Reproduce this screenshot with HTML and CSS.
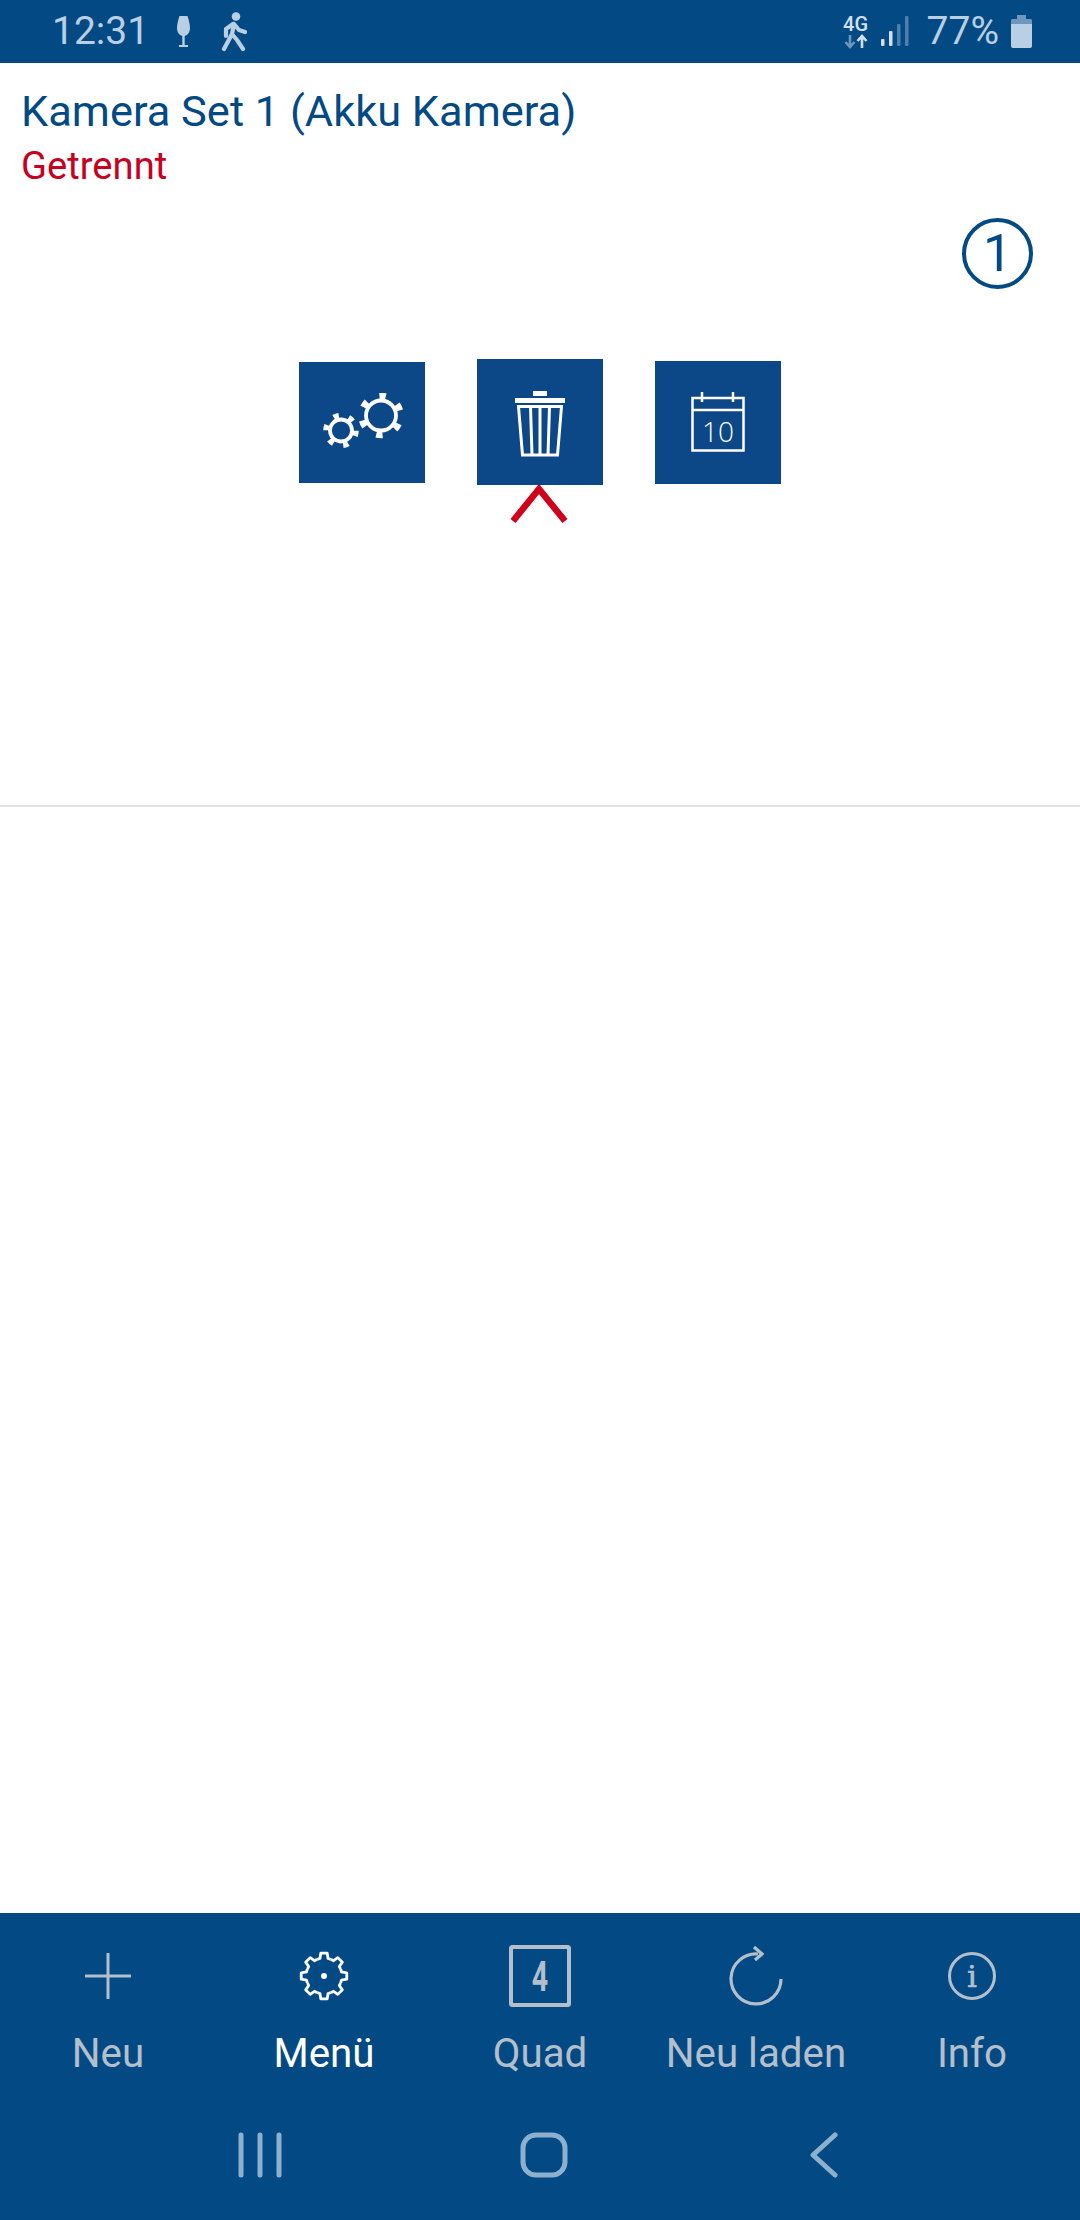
FILE: index.html
```html
<!DOCTYPE html>
<html lang="de">
<head>
    <meta charset="UTF-8">
    <meta name="viewport" content="width=device-width,initial-scale=1">
    <title>Kamera Set 1</title>
    <link rel="stylesheet" href="styles.css">
</head>
<body>

    <div class="statusBar">
        <div class="statusLeft">
            <span class="statusText">12:31</span>
            <svg class="icoGlass" width="13" height="32" viewBox="0 0 13 32">
                <path d="M2.500 0h8c1.500 4 2.500 9 2.500 12 0 4-2 7-5.300 8v9H11v2H2v-2h3.300v-9C2 19 0 16 0 12 0 9 1 4 2.500 0z" fill="#b9cfe3"/>
            </svg>
            <svg class="icoWalk" width="26" height="40" viewBox="0 0 26 40">
                <circle cx="15" cy="4.500" r="4.300" fill="#b9cfe3"/>
                <path d="M13 12l-2 10M13 12l5 6 6 2M12 12l-7 5v7M11 22L3 37M11 22l5 6 6 9" fill="none" stroke="#b9cfe3" stroke-width="4.200" stroke-linecap="round" stroke-linejoin="round"/>
            </svg>
        </div>
        <div class="statusRight">
            <div class="netType">
                <span class="netLabel">4G</span>
                <svg width="24" height="15" viewBox="0 0 24 15">
                    <path d="M6 1v11M1.500 8L6 13l4.500-5" fill="none" stroke="#6f97bd" stroke-width="2.600"/>
                    <path d="M18 14V3M13.500 7L18 2l4.500 5" fill="none" stroke="#d3e0ec" stroke-width="2.600"/>
                </svg>
            </div>
            <svg class="icoSignal" width="28" height="30" viewBox="0 0 28 30">
                <rect x="0" y="23" width="3.500" height="7" rx="1" fill="#d3e0ec"/>
                <rect x="8" y="15" width="3.500" height="15" rx="1" fill="#d3e0ec"/>
                <rect x="16" y="8" width="3.500" height="22" rx="1" fill="#4f7fac"/>
                <rect x="24" y="0" width="3.500" height="30" rx="1" fill="#4f7fac"/>
            </svg>
            <span class="statusText">77%</span>
            <svg class="icoBattery" width="21" height="33" viewBox="0 0 21 33">
                <path d="M6 0h9v4h4.500c.8 0 1.500.7 1.500 1.500V9H0V5.500C0 4.700.7 4 1.500 4H6z" fill="#6f97bd"/>
                <path d="M0 9h21v22c0 1.100-.9 2-2 2H2c-1.100 0-2-.9-2-2z" fill="#b9cfe3"/>
            </svg>
        </div>
    </div>

    <div class="panel">
        <div class="camTitle">Kamera Set 1 (Akku Kamera)</div>
        <div class="camState">Getrennt</div>

        <div class="numRow">
            <span class="numBadge">1</span>
        </div>

        <div class="actions">
            <div class="btnA btnGear">
                <svg class="gearPair" width="81" height="55" viewBox="0 0 81 55">
                    <circle cx="58" cy="22.500" r="15" fill="none" stroke="#fff" stroke-width="3.800"/>
                    <circle cx="58" cy="22.500" r="19.500" fill="none" stroke="#fff" stroke-width="6.500" pathLength="60" stroke-dasharray="3.200 6.800" stroke-dashoffset="-4.200"/>
                    <circle cx="18" cy="37.500" r="11" fill="none" stroke="#fff" stroke-width="3.800"/>
                    <circle cx="18" cy="37.500" r="15" fill="none" stroke="#fff" stroke-width="5.500" pathLength="60" stroke-dasharray="3.400 6.600" stroke-dashoffset="-.13"/>
                </svg>
            </div>
            <div class="btnA btnTrash">
                <svg class="trashIco" width="52" height="66" viewBox="0 0 52 66">
                    <rect x="19" y="0" width="14" height="5" fill="#fff"/>
                    <rect x="1" y="7" width="50" height="5" fill="#fff"/>
                    <path d="M4.500 15.500h43l-4 48.500h-35zM16.500 15.500l1.500 48.500M26 15.500v48.500M35.500 15.500l-1.500 48.500" fill="none" stroke="#fff" stroke-width="3"/>
                </svg>
                <svg class="pointer" width="58" height="38" viewBox="0 0 58 38">
                    <path d="M3 36L29 4l26 32" fill="none" stroke="#d0021b" stroke-width="6.500"/>
                </svg>
            </div>
            <div class="btnA btnCal">
                <svg width="54" height="60" viewBox="0 0 54 60">
                    <path d="M1.500 6h51v52.500h-51zM1.500 18h51M11 0v10M42 0v10" fill="none" stroke="#fff" stroke-width="2.500"/>
                    <text x="27" y="50" class="calDay" text-anchor="middle">10</text>
                </svg>
            </div>
        </div>
    </div>

    <div class="spacer"></div>

    <div class="tabBar">
        <div class="tab">
            <svg class="tabIco" width="64" height="64" viewBox="0 0 64 64">
                <path d="M32 9v46M9 32h46" fill="none" stroke="#b4bfcc" stroke-width="3"/>
            </svg>
            <span class="tabLabel">Neu</span>
        </div>
        <div class="tab on">
            <svg class="tabIco" width="64" height="64" viewBox="-32 -32 64 64">
                <defs>
                    <path id="cogTooth" d="M-6.890-16.630L-4.050-17.540-3.200-22.780H3.200L4.050-17.540 6.890-16.630" fill="none" stroke="#fff" stroke-width="2.800" stroke-linejoin="round"/>
                </defs>
                <use href="#cogTooth"/>
                <use href="#cogTooth" transform="rotate(45)"/>
                <use href="#cogTooth" transform="rotate(90)"/>
                <use href="#cogTooth" transform="rotate(135)"/>
                <use href="#cogTooth" transform="rotate(180)"/>
                <use href="#cogTooth" transform="rotate(225)"/>
                <use href="#cogTooth" transform="rotate(270)"/>
                <use href="#cogTooth" transform="rotate(315)"/>
                <circle r="3" fill="#fff"/>
            </svg>
            <span class="tabLabel">Menü</span>
        </div>
        <div class="tab">
            <svg class="tabIco" width="64" height="64" viewBox="0 0 64 64">
                <rect x="3" y="3" width="58" height="58" rx="1.500" fill="none" stroke="#b4bfcc" stroke-width="4"/>
                <text class="quadNum" transform="translate(32 47) scale(.68 1)" text-anchor="middle">4</text>
            </svg>
            <span class="tabLabel">Quad</span>
        </div>
        <div class="tab">
            <svg class="tabIco" width="64" height="64" viewBox="0 0 64 64">
                <path d="M57 35A25 25 0 1 1 34 10" fill="none" stroke="#b4bfcc" stroke-width="3.200"/>
                <path d="M30 3l8 7-7 6" fill="none" stroke="#b4bfcc" stroke-width="3.200"/>
            </svg>
            <span class="tabLabel">Neu laden</span>
        </div>
        <div class="tab">
            <svg class="tabIco" width="64" height="64" viewBox="0 0 64 64">
                <circle cx="32" cy="32" r="22.500" fill="none" stroke="#b4bfcc" stroke-width="3"/>
                <text class="infoDot" x="32" y="43" text-anchor="middle">i</text>
            </svg>
            <span class="tabLabel">Info</span>
        </div>
    </div>

    <div class="navBar">
        <svg width="60" height="46" viewBox="0 0 60 46">
            <path d="M11 3v40M30 3v40M49 3v40" fill="none" stroke="#8eb0cf" stroke-width="5" stroke-linecap="round"/>
        </svg>
        <svg width="60" height="46" viewBox="0 0 60 46">
            <rect x="9" y="3" width="42" height="40" rx="13" fill="none" stroke="#8eb0cf" stroke-width="5"/>
        </svg>
        <svg width="60" height="46" viewBox="0 0 60 46">
            <path d="M37 3L15 23l22 20" fill="none" stroke="#8eb0cf" stroke-width="5" stroke-linecap="round" stroke-linejoin="round"/>
        </svg>
    </div>

</body>
</html>
```

FILE: styles.css
```css
html {
    margin: 0;
    padding: 0;
}

body {
    margin: 0;
    padding: 0;
    width: 1080px;
    height: 2220px;
    overflow: hidden;
    display: flex;
    flex-direction: column;
    background-color: #fff;
    font-family: Roboto, sans-serif;
}

svg {
    display: block;
}

.statusBar {
    flex: none;
    height: 63px;
    box-sizing: border-box;
    padding: 0 48px 0 52px;
    display: flex;
    justify-content: space-between;
    align-items: center;
    background-color: #034a84;
}

.statusLeft,
.statusRight {
    display: flex;
    align-items: center;
}

.statusText {
    color: #b9cfe3;
    font-size: 39px;
    line-height: 63px;
}

.icoGlass {
    margin-left: 28px;
}

.icoWalk {
    margin-left: 31px;
}

.netType {
    display: flex;
    flex-direction: column;
    align-items: center;
    width: 24px;
}

.netLabel {
    color: #d3e0ec;
    font-size: 20px;
    font-weight: 500;
    line-height: 19px;
}

.icoSignal {
    margin-left: 13px;
    align-self: flex-end;
    margin-bottom: 17px;
}

.statusRight .statusText {
    margin-left: 18px;
}

.icoBattery {
    margin-left: 12px;
}

.panel {
    flex: none;
    height: 744px;
    box-sizing: border-box;
    padding: 24px 0 0 21px;
    border-bottom: 2px solid #e2e2e2;
}

.camTitle {
    color: #034a84;
    font-size: 43.4px;
    line-height: 50px;
}

.camState {
    margin-top: 8px;
    color: #c8001f;
    font-size: 38.2px;
    line-height: 42px;
}

.numRow {
    margin-top: 31px;
    padding-right: 47px;
    display: flex;
    justify-content: flex-end;
}

.numBadge {
    width: 71px;
    height: 71px;
    box-sizing: border-box;
    border: 4px solid #034a84;
    border-radius: 50%;
    color: #034a84;
    font-size: 52px;
    line-height: 63px;
    text-align: center;
}

.actions {
    margin: 70px 0 0 -21px;
    display: flex;
    justify-content: center;
    align-items: center;
    gap: 52px;
}

.btnA {
    position: relative;
    width: 126px;
    display: flex;
    justify-content: center;
    align-items: center;
    background-color: #0c4787;
}

.btnGear {
    height: 121px;
}

.gearPair {
    margin: 0 0 4px 2px;
}

.btnTrash {
    height: 126px;
}

.trashIco {
    margin-top: 3px;
}

.btnCal {
    height: 123px;
}

.pointer {
    position: absolute;
    top: 126px;
    left: 33px;
}

.calDay {
    fill: #fff;
    font-family: "Open Sans", sans-serif;
    font-weight: 300;
    font-size: 28px;
}

.spacer {
    flex: 1;
}

.tabBar {
    flex: none;
    height: 195px;
    box-sizing: border-box;
    padding-top: 31px;
    display: flex;
    background-color: #034a84;
}

.tab {
    flex: 1;
    display: flex;
    flex-direction: column;
    align-items: center;
    color: #b4bfcc;
}

.tab.on {
    color: #fff;
}

.tabLabel {
    margin-top: 24px;
    font-size: 40.3px;
    line-height: 44px;
}

.quadNum {
    fill: #b4bfcc;
    font-family: Roboto, sans-serif;
    font-weight: 700;
    font-size: 42px;
}

.infoDot {
    fill: #b4bfcc;
    stroke: #b4bfcc;
    stroke-width: .7px;
    font-family: "DejaVu Serif", serif;
    font-size: 30px;
}

.navBar {
    flex: none;
    height: 112px;
    box-sizing: border-box;
    padding: 24px 0 0 8px;
    display: flex;
    justify-content: center;
    gap: 224px;
    background-color: #034a84;
}
```
